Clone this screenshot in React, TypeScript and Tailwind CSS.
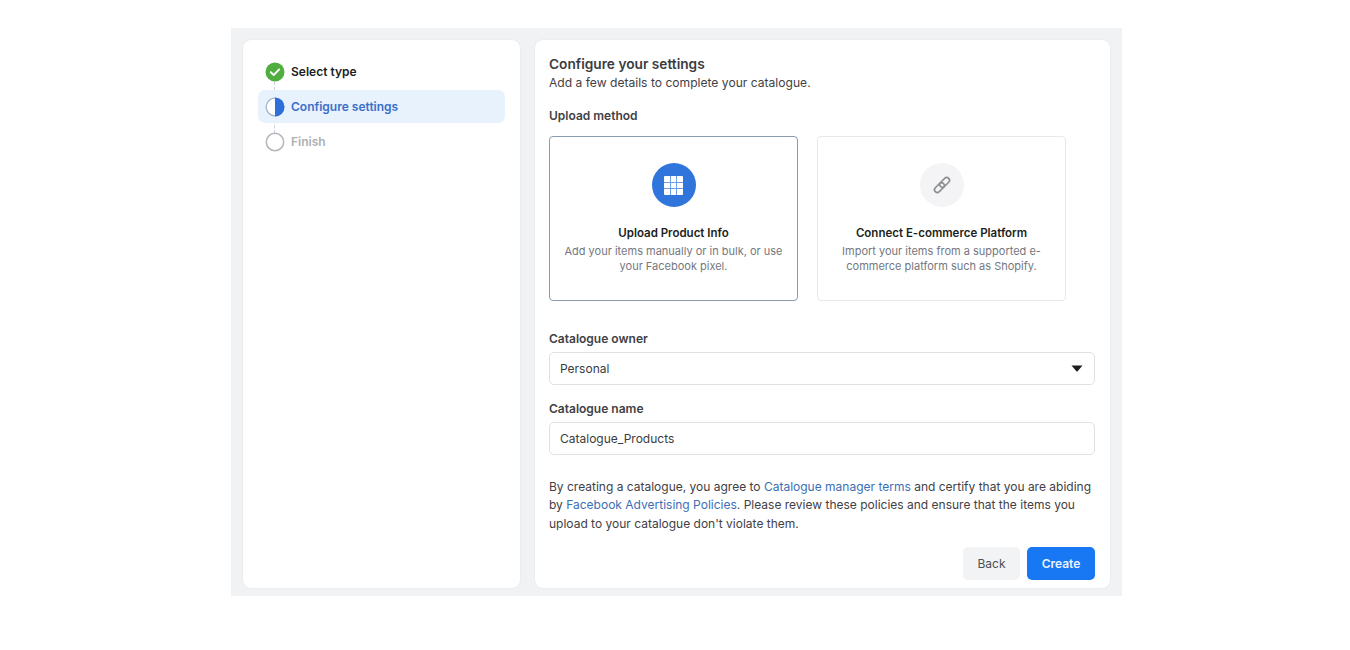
function StepDot({ state }: { state: "done" | "active" | "todo" }) {
  if (state === "done") {
    return (
      <svg width="20" height="20" viewBox="0 0 20 20" className="shrink-0">
        <circle cx="10" cy="10" r="9.5" fill="#4fae3f" />
        <path d="M5.8 10.2l2.9 2.8 5.5-5.6" fill="none" stroke="#fff" strokeWidth="1.9" strokeLinecap="round" strokeLinejoin="round" />
      </svg>
    );
  }
  if (state === "active") {
    return (
      <svg width="20" height="20" viewBox="0 0 20 20" className="shrink-0">
        <circle cx="10" cy="10" r="8.8" fill="#fff" stroke="#9fb0cc" strokeWidth="1.2" />
        <path d="M10 .5a9.5 9.5 0 0 1 0 19z" fill="#2f6fdc" />
      </svg>
    );
  }
  return (
    <svg width="20" height="20" viewBox="0 0 20 20" className="shrink-0">
      <circle cx="10" cy="10" r="8.7" fill="#fff" stroke="#b4b6ba" strokeWidth="1.5" />
    </svg>
  );
}

function MethodCard({
  title,
  lines,
  selected,
  icon,
}: {
  title: string;
  lines: string[];
  selected?: boolean;
  icon: React.ReactNode;
}) {
  return (
    <div
      className={
        selected
          ? "w-[249px] h-[165px] rounded-[4px] border border-[#8a9bb0] bg-white flex flex-col items-center pt-[26px]"
          : "w-[249px] h-[165px] rounded-[4px] border border-[#e6e8ec] bg-white flex flex-col items-center pt-[26px]"
      }
    >
      {icon}
      <div className="mt-[18px] text-[11.5px] leading-[16px] font-semibold text-[#1c1e21]">{title}</div>
      <div className="mt-[3px] text-[11px] leading-[15px] text-[#747780] text-center">
        {lines.map((l) => (
          <div key={l}>{l}</div>
        ))}
      </div>
    </div>
  );
}

export default function App() {
  return (
    <div className="w-[1350px] h-[650px] bg-white pt-[28px] pl-[231px] font-['Inter','Liberation_Sans',sans-serif]">
      <div className="w-[891px] h-[568px] bg-[#f1f2f4] p-[12px] flex gap-[15px]">
        <div className="w-[277px] h-[548px] bg-white rounded-[8px] shadow-[0_0_2px_rgba(0,0,0,0.08)] px-[15px] pt-[14px]">
          <div className="relative flex flex-col">
            <div className="absolute left-[16px] top-[28px] h-[56px] w-0 border-l border-dashed border-[#c9d1de]" />
            <div className="relative h-[36px] pb-px flex items-center gap-[6px] pl-[7px]">
              <StepDot state="done" />
              <span className="text-[12px] font-semibold text-[#1c1e21]">Select type</span>
            </div>
            <div className="relative h-[33px] flex items-center gap-[6px] pl-[7px] rounded-[7px] bg-[#e7f2fd]">
              <StepDot state="active" />
              <span className="text-[12px] font-semibold text-[#3a6fc9]">Configure settings</span>
            </div>
            <div className="relative h-[37px] flex items-center gap-[6px] pl-[7px]">
              <StepDot state="todo" />
              <span className="text-[12px] font-semibold text-[#adafb3]">Finish</span>
            </div>
          </div>
        </div>

        <div className="w-[575px] h-[548px] bg-white rounded-[8px] shadow-[0_0_2px_rgba(0,0,0,0.08)] pl-[14px] pr-[15px] pt-[14px]">
          <h1 className="pt-px text-[13.7px] leading-[19px] font-semibold text-[#3a3c40]">Configure your settings</h1>
          <p className="-mt-px text-[12.1px] leading-[19px] text-[#3f4145]">Add a few details to complete your catalogue.</p>

          <div className="mt-[16px] text-[12px] leading-[16px] font-semibold text-[#3f4145]">Upload method</div>
          <div className="mt-[12px] flex gap-[19px]">
            <MethodCard
              selected
              title="Upload Product Info"
              lines={["Add your items manually or in bulk, or use", "your Facebook pixel."]}
              icon={
                <div className="w-[44px] h-[44px] rounded-full bg-[#2f75dc] flex items-center justify-center">
                  <svg width="19" height="19" viewBox="0 0 19 19">
                    <rect width="19" height="19" rx="1" fill="#fff" />
                    <path d="M6.5 0v19M12.5 0v19M0 6.5h19M0 12.5h19" stroke="#6f9fe6" strokeWidth="1" />
                  </svg>
                </div>
              }
            />
            <MethodCard
              title="Connect E-commerce Platform"
              lines={["Import your items from a supported e-", "commerce platform such as Shopify."]}
              icon={
                <div className="w-[44px] h-[44px] rounded-full bg-[#f4f4f6] flex items-center justify-center">
                  <svg width="20" height="20" viewBox="0 0 20 20" fill="none" stroke="#8a8d91" strokeWidth="1.6">
                    <rect x="9.8" y="1.65" width="5.6" height="11.5" rx="2.8" transform="rotate(45 12.6 7.4)" />
                    <rect x="4.6" y="6.85" width="5.6" height="11.5" rx="2.8" transform="rotate(45 7.4 12.6)" />
                  </svg>
                </div>
              }
            />
          </div>

          <div className="mt-[30px] text-[12px] leading-[16px] font-semibold text-[#3f4145]">Catalogue owner</div>
          <div className="mt-[5px] h-[33px] rounded-[5px] border border-[#dfe1e5] flex items-center justify-between pl-[10px] pr-[11px]">
            <span className="text-[12px] text-[#3a3c40]">Personal</span>
            <svg width="12" height="7" viewBox="0 0 12 7">
              <path d="M.5.5h11L6.6 6.2a.8.8 0 0 1-1.2 0z" fill="#1c1e21" />
            </svg>
          </div>

          <div className="mt-[16px] text-[12px] leading-[16px] font-semibold text-[#3f4145]">Catalogue name</div>
          <div className="mt-[5px] h-[33px] rounded-[5px] border border-[#dfe1e5] flex items-center pl-[10px]">
            <span className="text-[12px] text-[#3a3c40]">Catalogue_Products</span>
          </div>

          <p className="mt-[23px] text-[12px] leading-[18.25px] text-[#3f4145]">
            By creating a catalogue, you agree to <span className="text-[#3b6fb5]">Catalogue manager terms</span> and certify that you are abiding
            <br />
            by <span className="text-[#3b6fb5]">Facebook Advertising Policies</span>. Please review these policies and ensure that the items you
            <br />
            upload to your catalogue don't violate them.
          </p>

          <div className="mt-[14.25px] flex justify-end gap-[7px]">
            <button className="w-[57px] h-[33px] rounded-[5px] bg-[#f2f3f5] text-[12px] text-[#4b4f56]">Back</button>
            <button className="w-[68px] h-[33px] rounded-[5px] bg-[#1877f2] text-[12px] font-semibold text-[#e8f3ff]">Create</button>
          </div>
        </div>
      </div>
    </div>
  );
}
